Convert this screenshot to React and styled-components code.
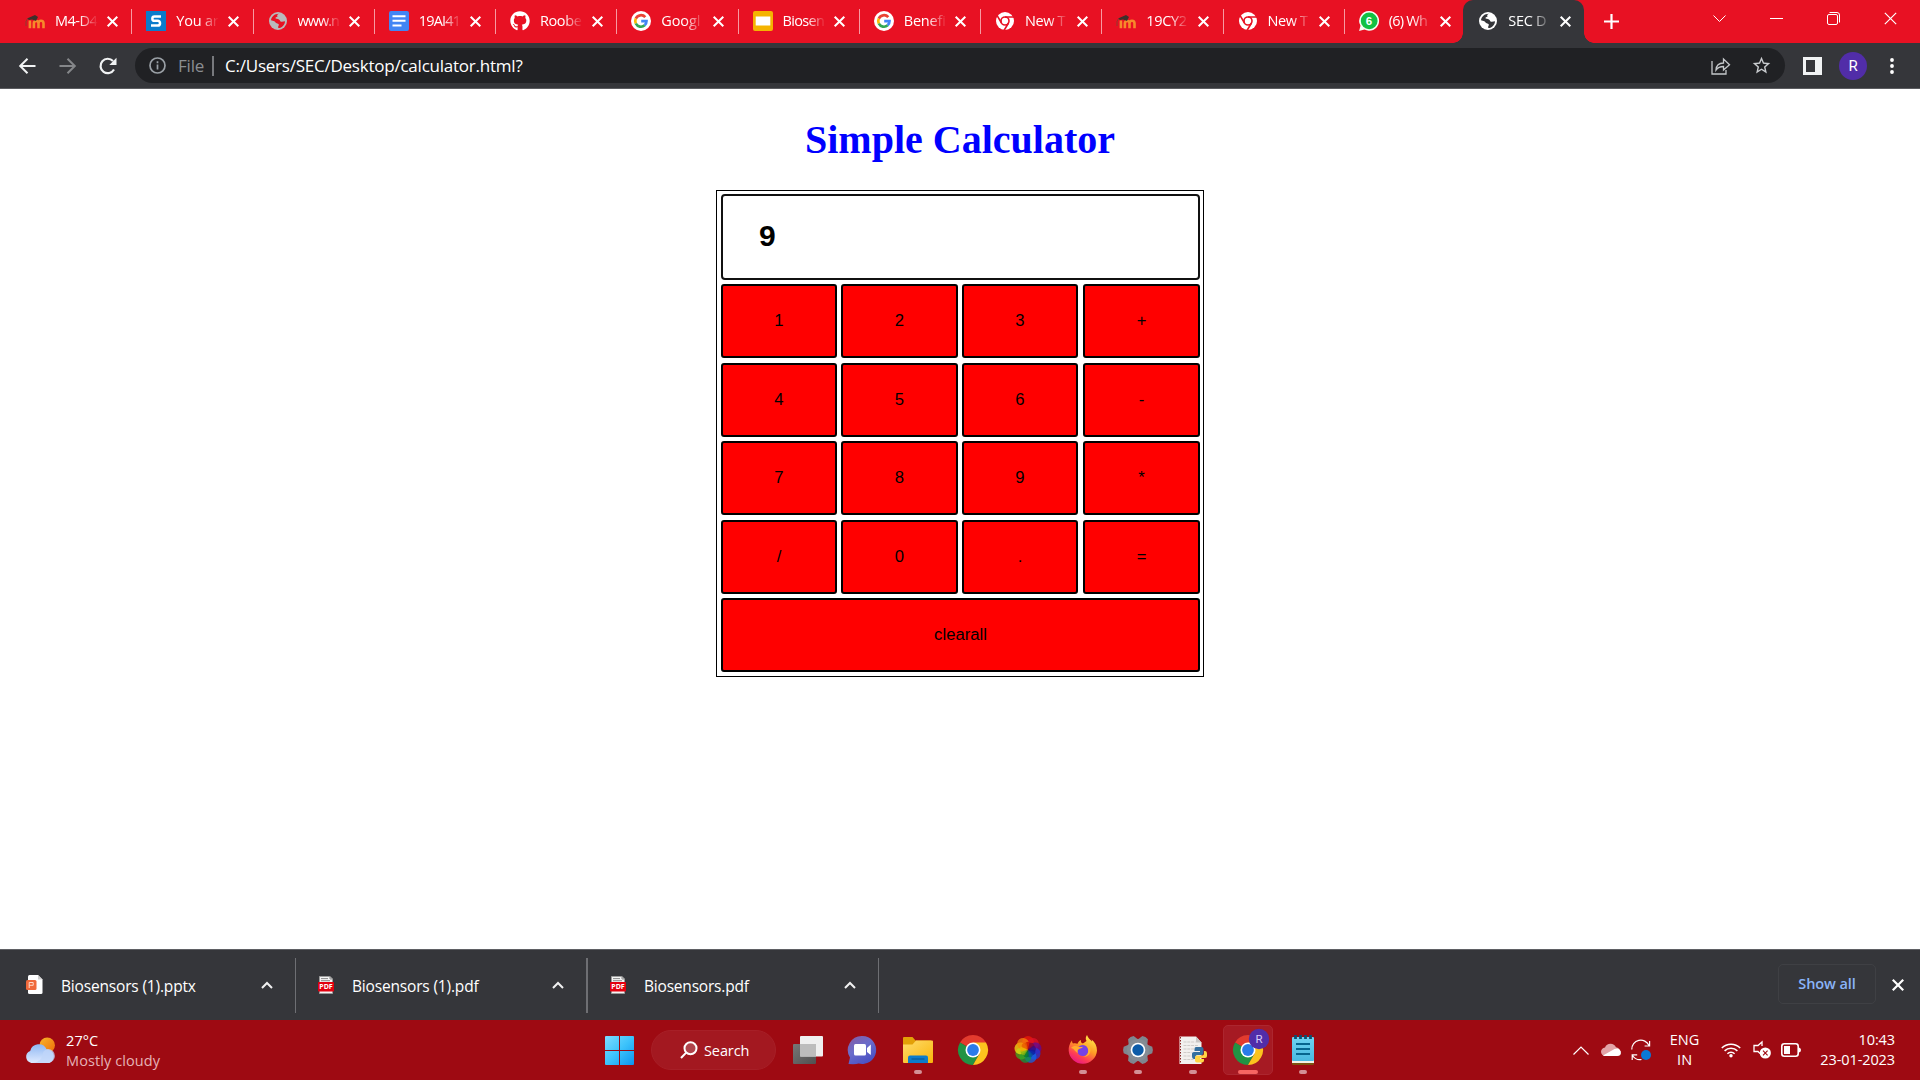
import React from "react";
import styled, { createGlobalStyle, css } from "styled-components";
import { FaGithub } from "react-icons/fa";

const ui = `"Open Sans", "Noto Sans", sans-serif`;

const GlobalStyle = createGlobalStyle`
  *, *::before, *::after { box-sizing: border-box; }
  html, body { margin: 0; padding: 0; background: #fff; }
  body { font-family: ${ui}; overflow: hidden; }
  svg { display: block; flex: none; overflow: visible; }
`;

const Screen = styled.div`
  width: 1920px;
  height: 1080px;
  display: flex;
  flex-direction: column;
  background: #fff;
`;

/* ---------- tab strip ---------- */

const TabStrip = styled.header`
  height: 43px;
  flex: none;
  display: flex;
  padding-left: 10px;
  background: #e81123;
  color: #fff;
`;

const TabBox = styled.div`
  width: ${(p) => (p.$last ? 119.5 : p.$active ? 121 : 121.25)}px;
  flex: none;
  height: 43px;
  display: flex;
  align-items: center;
  padding: 0 0 1px 15px;
  position: relative;
  ${(p) =>
    p.$divider &&
    css`
      &::after {
        content: "";
        position: absolute;
        right: -1px;
        top: 9px;
        width: 1px;
        height: 25px;
        background: #f79aa2;
      }
    `}
  ${(p) =>
    p.$active &&
    css`
      background: #35363a;
      border-radius: 10px 10px 0 0;
      &::before,
      &::after {
        content: "";
        position: absolute;
        bottom: 0;
        width: 10px;
        height: 10px;
      }
      &::before {
        left: -10px;
        background: radial-gradient(circle at 0 0, transparent 9.5px, #35363a 10px);
      }
      &::after {
        right: -10px;
        background: radial-gradient(circle at 100% 0, transparent 9.5px, #35363a 10px);
      }
    `}
`;

const TabTitle = styled.span`
  width: 43px;
  margin-left: 10px;
  margin-right: 8.5px;
  overflow: hidden;
  white-space: nowrap;
  font-size: 14.5px;
  line-height: 20px;
  letter-spacing: ${(p) => p.$track}px;
  -webkit-mask-image: linear-gradient(90deg, #000 24px, transparent 43px);
  mask-image: linear-gradient(90deg, #000 24px, transparent 43px);
`;

const NewTab = styled.div`
  width: 54px;
  display: flex;
  align-items: center;
  justify-content: center;
`;

const WindowControls = styled.div`
  margin-left: auto;
  padding-right: 1px;
  display: flex;
`;

const WindowButton = styled.div`
  width: 57px;
  height: 37px;
  display: flex;
  align-items: center;
  justify-content: center;
`;

/* ---------- toolbar ---------- */

const Toolbar = styled.nav`
  height: 46px;
  flex: none;
  display: flex;
  align-items: center;
  padding-left: 17px;
  background: #35363a;
  border-bottom: 1px solid #5b5c60;
`;

const NavIcon = styled.span`
  width: 40px;
  display: flex;
`;

const Omnibox = styled.div`
  width: 1650px;
  height: 35px;
  margin-left: -2px;
  padding: 0 13px 0 14px;
  border-radius: 18px;
  background: #202124;
  display: flex;
  align-items: center;
`;

const Scheme = styled.span`
  margin-left: 12px;
  width: 26px;
  font-size: 17px;
  letter-spacing: -0.2px;
  line-height: 24px;
  color: #8b8e92;
`;

const SchemeRule = styled.i`
  width: 2px;
  height: 20px;
  margin: 0 11px 0 8px;
  background: #77797d;
`;

const Url = styled.span`
  flex: 1;
  font-size: 17px;
  line-height: 24px;
  letter-spacing: -0.23px;
  color: #fff;
`;

const OmniActions = styled.span`
  display: flex;
  align-items: center;
  gap: 20px;
`;

const ToolbarEnd = styled.div`
  flex: 1;
  display: flex;
  align-items: center;
  padding-left: 18px;
`;

const Avatar = styled.span`
  width: 28px;
  height: 28px;
  margin: 0 23px 0 17px;
  border-radius: 50%;
  background: #512da8;
  color: #fff;
  font: 15px/28px Roboto, sans-serif;
  text-align: center;
`;

/* ---------- page ---------- */

const Page = styled.main`
  flex: 1;
  display: flex;
  flex-direction: column;
  align-items: center;
`;

const Heading = styled.h1`
  margin: 28px 0 27px;
  font: bold 40px/46px "Liberation Serif", serif;
  color: #00f;
`;

const Calculator = styled.form`
  width: 488px;
  height: 487px;
  margin: 0;
  padding: 3px 3px 4px 4px;
  border: 1px solid #000;
  display: grid;
  grid-template-columns: 116px 117px 117px 117px;
  grid-template-rows: 86px 75px 74px 75px 74px 74px;
  gap: 4px;
`;

const Display = styled.output`
  grid-column: 1 / -1;
  padding-left: 36px;
  border: 2px solid #111;
  border-radius: 4px;
  font: bold 30px/79px "Liberation Sans", sans-serif;
  color: #000;
`;

const Key = styled.button`
  grid-column: ${(p) => (p.$wide ? "1 / -1" : "auto")};
  height: 74px;
  margin: 0;
  padding: 0;
  border: 2px solid #000;
  border-radius: 3px;
  background: #f00;
  color: #000;
  font: 16.67px "Liberation Sans", sans-serif;
  &:nth-of-type(4n + 3) {
    margin-right: 1px;
  }
`;

/* ---------- downloads shelf ---------- */

const Shelf = styled.section`
  height: 71px;
  flex: none;
  display: flex;
  align-items: center;
  border-top: 1px solid #5f6064;
  background: #35363a;
  color: #fff;
`;

const Download = styled.div`
  width: ${(p) => p.$width}px;
  height: 55px;
  display: flex;
  align-items: center;
  padding: 0 22px 0 ${(p) => p.$inset}px;
  border-right: ${(p) => p.$rule || 1}px solid #6e6f73;
`;

const FileName = styled.span`
  flex: 1;
  margin-left: 18px;
  padding-top: 1px;
  font-size: 15.5px;
  line-height: 22px;
  letter-spacing: ${(p) => p.$track}px;
  white-space: nowrap;
`;

const ShowAll = styled.button`
  width: 98px;
  height: 40px;
  margin: 0 16px 2px auto;
  padding: 0;
  border: 1px solid #3f4044;
  border-radius: 5px;
  background: transparent;
  color: #8ab4f8;
  font: 600 14.5px/38px ${ui};
  letter-spacing: -0.1px;
`;

const ShelfClose = styled.span`
  width: 28px;
  padding-bottom: 1px;
`;

/* ---------- taskbar ---------- */

const Taskbar = styled.footer`
  height: 60px;
  flex: none;
  display: flex;
  align-items: center;
  background: #9e0a12;
  color: #fff;
`;

const Weather = styled.div`
  width: 592px;
  padding: 1px 0 0 25px;
  display: flex;
  align-items: center;
  gap: 10px;
`;

const Lines = styled.div`
  display: flex;
  flex-direction: column;
  text-align: ${(p) => p.$align || "left"};
  font-size: 14.5px;
  line-height: 20px;
  letter-spacing: ${(p) => p.$track || 0}px;
  white-space: nowrap;
`;

const Muted = styled.span`
  color: #e5b3b6;
`;

const Slot = styled.div`
  width: 55px;
  height: 60px;
  display: flex;
  align-items: center;
  justify-content: center;
  position: relative;
  &::after {
    content: "";
    display: ${(p) => (p.$running ? "block" : "none")};
    position: absolute;
    bottom: 6px;
    left: ${(p) => (p.$active ? 17.5 : 23.5)}px;
    width: ${(p) => (p.$active ? 20 : 8)}px;
    height: 4px;
    border-radius: 2px;
    background: ${(p) => (p.$active ? "#f76562" : "#d48f95")};
  }
`;

const ActiveTile = styled.div`
  width: 50px;
  height: 50px;
  border-radius: 5px;
  border: 1px solid #ac262f;
  background: #a61a23;
  display: flex;
  align-items: center;
  justify-content: center;
`;

const Search = styled.div`
  width: 125px;
  height: 40px;
  margin: 0 4px;
  padding-left: 28px;
  border-radius: 20px;
  border: 1px solid #a71f27;
  background: #a31820;
  display: flex;
  align-items: center;
  gap: 6px;
  font-size: 14.5px;
  letter-spacing: -0.1px;
`;

const Tray = styled.div`
  margin-left: auto;
  padding-right: 25px;
  display: flex;
  align-items: center;
`;

const TrayIcon = styled.span`
  margin-right: ${(p) => p.$after}px;
`;

/* ---------- drawings ---------- */

const Cross = ({ size = 11, weight = 2, color = "#fff" }) => (
  <svg width={size} height={size} viewBox="0 0 11 11">
    <path d="M.7.7l9.6 9.6M10.3.7L.7 10.3" stroke={color} strokeWidth={weight} />
  </svg>
);

const Moodle = () => (
  <svg width="20" height="20" viewBox="0 0 20 20">
    <path
      d="M4 17.300V9.500M8 17.300v-5a2.200 2.200 0 0 1 4.600 0v5M12.600 12.300a2.500 2.500 0 0 1 5 0v5"
      fill="none"
      stroke="#f7892b"
      strokeWidth="2.600"
      transform="translate(.9 0)"
    />
    <path d="M2 7.500L10 4l3 2-2 4-4-1.500-3 .5z" fill="#3e302b" />
    <path d="M2.500 7.500L1 10.500v4.500" fill="none" stroke="#8e3a30" strokeWidth="1" />
  </svg>
);

const Swayam = () => (
  <svg width="20" height="20" viewBox="0 0 20 20">
    <rect width="20" height="20" fill="#0b7bcb" />
    <path
      d="M15 5.500H8.500a2 2 0 0 0 0 4.300h3.200a2.300 2.300 0 0 1 0 4.700H5"
      fill="none"
      stroke="#fff"
      strokeWidth="2.500"
    />
  </svg>
);

const Globe = ({ land = "#e81123", sea = "#fff" }) => (
  <svg width="20" height="20" viewBox="0 0 20 20">
    <circle cx="10" cy="10" r="9" fill={sea} />
    <path
      d="M11 2.800C9.200 3.500 8.800 4.600 9.600 5.500 8.300 6 7.200 6.500 7.600 7.500 9 7.900 11 8 11.800 9.200 12.300 10.500 13 11 14 10.800l3-.6c0 3.300-2.800 6.600-6.600 6.900-.6-.9-.1-1.800.3-2.500.6-1.300-.3-2-1.500-2.200C7.600 12.200 7.400 11 6.300 10.300L3 9.300C3.300 5.700 6.600 2.700 11 2.800z"
      fill={land}
    />
    <path d="M3 10.200c1.800-.3 3.300.4 4 1.600.8 1.200-.2 2.600.5 4.500C4.800 15.300 3 13 3 10.200z" fill={sea} />
  </svg>
);

const Docs = () => (
  <svg width="20" height="20" viewBox="0 0 20 20">
    <rect width="20" height="20" rx="2" fill="#4285f4" />
    <path d="M3.500 5.300h13M3.500 9.700h13M3.500 14.500h9" stroke="#fff" strokeWidth="2" />
  </svg>
);

const Google = () => (
  <svg width="20" height="20" viewBox="0 0 20 20">
    <circle cx="10" cy="10" r="10" fill="#fff" />
    <g fill="none" strokeWidth="2.700">
      <path d="M14.300 6.200A5.700 5.700 0 0 0 4.800 7.600" stroke="#ea4335" />
      <path d="M4.800 7.600a5.700 5.700 0 0 0 0 4.900" stroke="#fbbc05" />
      <path d="M4.800 12.500a5.700 5.700 0 0 0 8.900 1.800" stroke="#34a853" />
      <path d="M13.700 14.300c1.200-1.100 1.800-2.500 1.800-4.200H10.200" stroke="#4285f4" />
    </g>
  </svg>
);

const Slides = () => (
  <svg width="20" height="20" viewBox="0 0 20 20">
    <rect width="20" height="20" rx="2" fill="#f5b400" />
    <rect x="2.700" y="5.500" width="14.600" height="9" fill="#fff" />
  </svg>
);

const ChromeMono = () => (
  <svg width="20" height="20" viewBox="0 0 20 20">
    <circle cx="10" cy="10" r="9" fill="#fff" />
    <circle cx="10" cy="10" r="4" fill="none" stroke="#e81123" strokeWidth="1.600" />
    <path d="M10 6h9M6.500 12L2 4.300M13.500 12L9 19.500" stroke="#e81123" strokeWidth="1.600" />
  </svg>
);

const WhatsApp = () => (
  <svg width="20" height="20" viewBox="0 0 20 20">
    <path d="M10.200 0a9.900 9.900 0 1 1-4.700 18.600L.1 20l1.400-5.200A9.900 9.900 0 0 1 10.200 0z" fill="#f4fff6" />
    <circle cx="10.200" cy="9.900" r="8.400" fill="#12c143" />
    <text x="10" y="14" fontFamily="Liberation Sans" fontWeight="bold" fontSize="11.500" fill="#fff" textAnchor="middle">
      6
    </text>
  </svg>
);

const Chrome = ({ badge }) => (
  <svg width="30" height="30" viewBox="0 0 30 30">
    <path d="M15 15L2 7.500A15 15 0 0 1 28 7.500z" fill="#e33b2e" />
    <path d="M15 15L2 7.500A15 15 0 0 0 15 30l6.500-11.200z" fill="#219344" />
    <path d="M15 7.500h13A15 15 0 0 1 15 30l6.500-11.200z" fill="#fcc31e" />
    <circle cx="15" cy="15" r="7.500" fill="#fff" />
    <circle cx="15" cy="15" r="5.900" fill="#2a7bea" />
    {badge && (
      <g>
        <circle cx="26" cy="4" r="10.200" fill="#512da8" />
        <text x="26" y="8" fontFamily="Roboto" fontSize="11.500" fill="#d7c9f7" textAnchor="middle">
          {badge}
        </text>
      </g>
    )}
  </svg>
);

const PowerPointFile = () => (
  <svg width="17" height="20" viewBox="0 0 17 20">
    <path d="M2 1.500Q2 0 3.500 0H12l4.500 4.500V17.500q0 1.500-1.500 1.500H3.500Q2 19 2 17.500z" fill="#fff" />
    <path d="M12 0l4.500 4.500H12z" fill="#d0d0d0" />
    <rect y="5" width="10.500" height="10" rx="1.500" fill="#f0693b" />
    <path d="M3.200 13V7.500h4v2.800h-4" fill="none" stroke="#ffd9c8" strokeWidth="1" />
  </svg>
);

const PdfFile = () => (
  <svg width="16" height="18" viewBox="0 0 16 18">
    <path d="M1.500.5h10.500l2.500 2.500v14.500h-13z" fill="#f4f4f4" stroke="#9c9c9c" />
    <path d="M3 2.600h7M3 4.700h9M12 .5V3h2.500" stroke="#8b8b8b" fill="none" />
    <rect y="6" width="16" height="9.500" rx=".7" fill="#e3000f" />
    <text x="8" y="13.200" fontFamily="Open Sans" fontWeight="bold" fontSize="7" fill="#fff" textAnchor="middle">
      PDF
    </text>
  </svg>
);

const Chevron = () => (
  <svg width="12" height="8" viewBox="0 0 12 8">
    <path d="M1 7l5-5 5 5" fill="none" stroke="#f1f1f1" strokeWidth="2" />
  </svg>
);

const WeatherIcon = () => (
  <svg width="31" height="27" viewBox="0 0 30 26">
    <defs>
      <linearGradient id="sun" x1="0" y1="0" x2="1" y2="1">
        <stop offset="0" stopColor="#f8b62a" />
        <stop offset="1" stopColor="#ee6c09" />
      </linearGradient>
      <linearGradient id="cloud" x1="0" y1="0" x2="0" y2="1">
        <stop offset="0" stopColor="#8fb8f3" />
        <stop offset="1" stopColor="#dfeaff" />
      </linearGradient>
    </defs>
    <circle cx="21.500" cy="8" r="7.500" fill="url(#sun)" />
    <path d="M6 25a6 6 0 0 1-1-11.500 8.500 8.500 0 0 1 16-1.500A6.700 6.700 0 0 1 23.500 25z" fill="url(#cloud)" />
    <path d="M17 17c0-3 2.500-5.500 6-5.500a6.800 6.800 0 0 1 0 13.500H6c6 0 10-3 11-8z" fill="#c0d6fa" opacity=".75" />
  </svg>
);

const Windows = () => (
  <svg width="29" height="29" viewBox="0 0 29 29">
    <defs>
      <linearGradient id="win" x1="0" y1="0" x2="1" y2="1">
        <stop offset="0" stopColor="#7fdcff" />
        <stop offset=".5" stopColor="#3cc3fb" />
        <stop offset="1" stopColor="#0c93f0" />
      </linearGradient>
    </defs>
    <path d="M0 1Q0 0 1 0H14V14H0zM15 0H28Q29 0 29 1V14H15zM0 15H14V29H1Q0 29 0 28zM15 15H29V28Q29 29 28 29H15z" fill="url(#win)" />
  </svg>
);

const Magnifier = () => (
  <svg width="18" height="18" viewBox="0 0 18 18">
    <circle cx="10.500" cy="7.300" r="6" fill="#b0444c" stroke="#fff" strokeWidth="2" />
    <path d="M6.200 11.600L1 17" stroke="#fff" strokeWidth="2" />
  </svg>
);

const TaskView = () => (
  <svg width="30" height="28" viewBox="0 0 30 28">
    <defs>
      <linearGradient id="tvback" x1="0" y1="0" x2="1" y2="1">
        <stop offset="0" stopColor="#777" />
        <stop offset="1" stopColor="#505050" />
      </linearGradient>
    </defs>
    <rect y="8" width="23" height="20" rx="1" fill="url(#tvback)" />
    <rect x="7" width="23" height="20.500" rx="1" fill="#f0f0f0" />
    <path d="M7 8h16v12.500H7z" fill="#bdbdbd" />
  </svg>
);

const Chat = () => (
  <svg width="29" height="29" viewBox="0 0 29 29">
    <defs>
      <linearGradient id="chat" x1="0" y1="0" x2=".6" y2="1">
        <stop offset="0" stopColor="#8a5a9f" />
        <stop offset=".5" stopColor="#6a6ccb" />
        <stop offset="1" stopColor="#4a51c4" />
      </linearGradient>
    </defs>
    <path d="M14.500 0a14 14 0 1 1-4 27.500Q8 28.500.5 28l1.500-6.500A14 14 0 0 1 14.500 0z" fill="url(#chat)" />
    <rect x="6" y="8" width="12" height="11.500" rx="1.500" fill="#fff" />
    <path d="M19 12l3.800-3.500v10.500L19 16z" fill="#fff" />
  </svg>
);

const Folder = () => (
  <svg width="30" height="28" viewBox="0 0 30 28">
    <defs>
      <linearGradient id="fold" x1="0" y1="0" x2="1" y2="1">
        <stop offset="0" stopColor="#ffdc6b" />
        <stop offset="1" stopColor="#f9b50b" />
      </linearGradient>
    </defs>
    <path d="M0 2Q0 1 1 1h8.500l3 3.500H28v8H0z" fill="#e3a007" />
    <path d="M0 8.500h9.500L13 4.500h16q1 0 1 1V26q0 1-1 1H1q-1 0-1-1z" fill="url(#fold)" />
    <path d="M5 27v-5.500q0-2 2-2h16q2 0 2 2V27z" fill="#0c7ccb" />
    <path d="M8.500 23h13" stroke="#07508c" strokeWidth="1" />
  </svg>
);

const petals = ["#f01c08", "#e0102a", "#5c0a9c", "#1a3ae0", "#0a6af0", "#0aa040", "#3cb020", "#f4ea10", "#f88a0a"];
const cores = ["#d01400", "#8a0830", "#3a0a80", "#0c1c9c", "#08509c", "#067a30", "#8ab410", "#f0b400", "#e85a00"];

const Petals = () => (
  <svg width="30" height="30" viewBox="0 0 30 30">
    {petals.map((fill, i) => (
      <circle key={fill} cx="15" cy="7" r="5.900" fill={fill} opacity=".72" transform={`rotate(${i * 40} 15 14.700)`} />
    ))}
    {cores.map((fill, i) => (
      <path
        key={fill}
        d="M15 14.700L11.800 8.500Q15 4.800 18.200 8.500z"
        fill={fill}
        opacity=".8"
        transform={`rotate(${i * 40} 15 14.700)`}
      />
    ))}
  </svg>
);

const Firefox = () => (
  <svg width="30" height="30" viewBox="0 0 30 30">
    <defs>
      <linearGradient id="fox" x1=".8" y1="0" x2=".25" y2="1">
        <stop offset="0" stopColor="#fff14f" />
        <stop offset=".45" stopColor="#ff9a24" />
        <stop offset=".75" stopColor="#ff3d54" />
        <stop offset="1" stopColor="#e5138c" />
      </linearGradient>
    </defs>
    <path
      d="M4 5.500c0 1.500.5 2.500 1 3 1.500-.5 3-.4 4.500.2C10.500 6.500 11.500 5.500 13 5c-.6 1.500.3 3 2 3.500L18.500 6C17 3.500 18 1.500 19 0c1 3 3.200 4.500 5 6.500 0-.8-.1-1.200-.4-2C27 7 29 11 29 15.500A14.200 14.200 0 0 1 .7 16C.5 12 1.500 8.500 4 5.500z"
      fill="url(#fox)"
    />
    <circle cx="14.800" cy="15.500" r="5.500" fill="#7542e5" />
    <path d="M3 13c2-2 4-2.500 6.500-1.500 2 .8 4 .5 5.500.3-1 1.700-2.500 1.600-4 2.200-2 1-1.500 3-1 4-3-1-4-5-7-5z" fill="#ffab2e" />
    <path d="M15 8.500c4-.5 7 2 7.500 5.500.5 5-3 8-7.500 8 4-1 6-4 5-8-.5-2.500-2-4-5-5.500z" fill="#ffb52f" />
  </svg>
);

const Gear = () => (
  <svg width="30" height="30" viewBox="0 0 30 30">
    {[30, 90, 150, 210, 270, 330].map((a) => (
      <path key={a} d="M9.500 6L11.800.700Q15-.5 18.200.7L20.500 6z" fill="#7f868f" transform={`rotate(${a} 15 15)`} />
    ))}
    <circle cx="15" cy="15" r="11" fill="#858c94" />
    <circle cx="15" cy="15" r="7.300" fill="#fff" />
    <circle cx="15" cy="15" r="5.700" fill="#0c5ba8" />
  </svg>
);

const PythonFile = () => (
  <svg width="28" height="29" viewBox="0 0 28 29">
    <path d="M.5.500H17l5.500 6V28H.5z" fill="#f2f0ee" />
    <path d="M17 .5v6h5.500z" fill="#c9c7c5" />
    <path d="M1.500 1v27" stroke="#8a1f1f" strokeDasharray="1.500 1.500" />
    <path d="M4.500 6h12M4.500 9.500h15M4.500 13h11M4.500 16.500h8M4.500 20h8M4.500 23.500h10" stroke="#cfcbc8" strokeDasharray="3 .8" />
    <path d="M17 11h5.500q2 0 2 2v4q0 2-2 2h-4q-2 0-2 2v2H15q-2 0-2-3v-2.500q0-1.500 2-1.500h6v-1h-5.500V13q0-2 1.500-2z" fill="#34709f" />
    <path d="M25 15h1q2 0 2 3v2q0 2-2 2h-5v1h4v1.500q0 2-2 2h-5q-2 0-2-2V21.500q0-2 2-2h5q2 0 2-2z" fill="#ffd545" />
  </svg>
);

const Notepad = () => (
  <svg width="22" height="30" viewBox="0 0 22 30">
    <defs>
      <linearGradient id="note" x1="0" y1="0" x2="0" y2="1">
        <stop offset="0" stopColor="#6fd3f1" />
        <stop offset="1" stopColor="#49b9e0" />
      </linearGradient>
    </defs>
    <rect y="25" width="22" height="5" rx="1" fill="#7d5110" />
    <rect y="23" width="22" height="5" fill="#f5f0e6" />
    <rect y="2" width="22" height="24" rx="1" fill="url(#note)" />
    <path d="M4 9h14M4 14h14M4 19h14" stroke="#06658e" strokeWidth="2" />
    <path d="M3.500 0v4M8.500 0v4M13.500 0v4M18.500 0v4" stroke="#0a4f72" strokeWidth="2.800" />
  </svg>
);

const TrayUp = () => (
  <svg width="16" height="9" viewBox="0 0 16 9">
    <path d="M.5 8.500L8 1l7.500 7.500" fill="none" stroke="#fff" strokeWidth="1.200" />
  </svg>
);

const OneDrive = () => (
  <svg width="20" height="14" viewBox="0 0 20 14">
    <path d="M4.500 13A4.200 4.200 0 0 1 4 4.500 6 6 0 0 1 15 4.300 4.500 4.500 0 0 1 16 13z" fill="#e2a4a8" />
    <path d="M2 12.500L13.500 6q4.500-2 6.300 2.500.8 4.500-3.800 4.500H4.500Q3 13 2 12.500z" fill="#fff" />
  </svg>
);

const Sync = () => (
  <svg width="20" height="21" viewBox="0 0 20 21">
    <path d="M.8 9.500A9 9 0 0 1 18 5.500M18.600 1v5h-5M1.200 20v-5.200h5M1.500 15.500c2 3 5.500 4.700 9 4" fill="none" stroke="#fff" strokeWidth="1.200" />
    <circle cx="15" cy="15" r="5" fill="#0a78d7" />
  </svg>
);

const Wifi = () => (
  <svg width="20" height="16" viewBox="0 0 20 16">
    <path d="M.8 6a13 13 0 0 1 18.400 0M3.600 8.900a9 9 0 0 1 12.800 0M6.400 11.700a5 5 0 0 1 7.200 0" fill="none" stroke="#fff" strokeWidth="1.500" />
    <circle cx="10" cy="13.800" r="1.700" fill="#fff" />
  </svg>
);

const Muffled = () => (
  <svg width="18" height="18" viewBox="0 0 18 18">
    <path d="M9 5V1L5 4.500H1v6h4l2 2" fill="none" stroke="#fff" strokeWidth="1.300" />
    <circle cx="12.300" cy="12" r="5.600" fill="#fff" />
    <path d="M10 9.700l4.600 4.600M14.600 9.700L10 14.300" stroke="#9e0a12" strokeWidth="1.100" />
  </svg>
);

const Battery = () => (
  <svg width="20" height="14" viewBox="0 0 20 14">
    <rect x=".8" y=".8" width="16.400" height="12.400" rx="2.500" fill="none" stroke="#fff" strokeWidth="1.600" />
    <rect x="3" y="3" width="6" height="8" fill="#fff" />
    <path d="M18 4.500q2 .5 2 2.500t-2 2.500z" fill="#fff" />
  </svg>
);

/* ---------- content ---------- */

const tabs = [
  { icon: <Moodle />, title: "M4-D4", track: -0.5 },
  { icon: <Swayam />, title: "You ar", track: -0.2 },
  { icon: <Globe sea="#b9b9bb" />, title: "www.n", track: -1 },
  { icon: <Docs />, title: "19AI41", track: -0.8 },
  { icon: <FaGithub size={20} />, title: "Roobe", track: -0.4 },
  { icon: <Google />, title: "Googl", track: -0.1 },
  { icon: <Slides />, title: "Biosen", track: -0.65 },
  { icon: <Google />, title: "Benefi", track: -0.2 },
  { icon: <ChromeMono />, title: "New T", track: -0.4 },
  { icon: <Moodle />, title: "19CY2", track: -0.3 },
  { icon: <ChromeMono />, title: "New T", track: -0.4 },
  { icon: <WhatsApp />, title: "(6) Wh", track: -0.75 },
  { icon: <Globe land="#35363a" />, title: "SEC D", track: -0.3, active: true },
];

const keys = ["1", "2", "3", "+", "4", "5", "6", "-", "7", "8", "9", "*", "/", "0", ".", "="];

const Browser = () => (
  <>
    <TabStrip>
      {tabs.map((tab, i) => (
        <TabBox key={i} $active={tab.active} $last={i === tabs.length - 2} $divider={i < tabs.length - 2}>
          {tab.icon}
          <TabTitle $track={tab.track}>{tab.title}</TabTitle>
          <Cross />
        </TabBox>
      ))}
      <NewTab>
        <svg width="15" height="15" viewBox="0 0 15 15">
          <path d="M7.500 0v15M0 7.500h15" stroke="#fff" strokeWidth="2.200" />
        </svg>
      </NewTab>
      <WindowControls>
        <WindowButton>
          <svg width="13" height="8" viewBox="0 0 13 8">
            <path d="M.5.500l6 6 6-6" fill="none" stroke="#fff" strokeWidth="1" />
          </svg>
        </WindowButton>
        <WindowButton>
          <svg width="13" height="1" viewBox="0 0 13 1">
            <path d="M0 .5h13" stroke="#fff" />
          </svg>
        </WindowButton>
        <WindowButton>
          <svg width="13" height="13" viewBox="0 0 13 13">
            <rect x=".5" y="2.500" width="10" height="10" rx="1.500" fill="none" stroke="#fff" />
            <path d="M2.500.500H10Q12.500.5 12.500 3v7.500" fill="none" stroke="#fff" />
          </svg>
        </WindowButton>
        <WindowButton>
          <Cross size={13} weight={1} />
        </WindowButton>
      </WindowControls>
    </TabStrip>
    <Toolbar>
      <NavIcon>
        <svg width="20" height="20" viewBox="0 0 20 20">
          <path d="M18.500 10H3.500M10.500 2.700L3.200 10l7.300 7.300" fill="none" stroke="#f1f3f4" strokeWidth="2" />
        </svg>
      </NavIcon>
      <NavIcon>
        <svg width="20" height="20" viewBox="0 0 20 20">
          <path d="M2.500 10h15M10.500 2.700l7.300 7.300-7.300 7.300" fill="none" stroke="#85878a" strokeWidth="2" />
        </svg>
      </NavIcon>
      <NavIcon>
        <svg width="20" height="20" viewBox="0 0 20 20">
          <path d="M17 13.500A7.200 7.200 0 1 1 16 5" fill="none" stroke="#f1f3f4" strokeWidth="2.200" />
          <path d="M19.500 1.800V9h-7.200z" fill="#f1f3f4" />
        </svg>
      </NavIcon>
      <Omnibox>
        <svg width="17" height="17" viewBox="0 0 17 17">
          <circle cx="8.500" cy="8.500" r="7.500" fill="none" stroke="#9aa0a6" strokeWidth="1.700" />
          <path d="M8.500 7.500v5M8.500 4.300v1.900" stroke="#9aa0a6" strokeWidth="1.700" />
        </svg>
        <Scheme>File</Scheme>
        <SchemeRule />
        <Url>C:/Users/SEC/Desktop/calculator.html?</Url>
        <OmniActions>
          <svg width="20" height="18" viewBox="0 0 20 18">
            <path d="M1 4v13h14v-4" fill="none" stroke="#c4c7ca" strokeWidth="1.300" />
            <path d="M5 13c.3-4.500 3-7 7.500-7V2l6 5.700-6 5.300V9.500C9 9.500 6.800 10.500 5 13z" fill="none" stroke="#c4c7ca" strokeWidth="1.300" />
          </svg>
          <svg width="21" height="21" viewBox="0 0 24 24">
            <path
              d="M22 9.240l-7.190-.62L12 2 9.190 8.630 2 9.240l5.460 4.730L5.820 21 12 17.270 18.180 21l-1.630-7.030L22 9.240zM12 15.400l-3.760 2.270 1-4.280-3.320-2.880 4.380-.38L12 6.100l1.710 4.040 4.380.38-3.320 2.880 1 4.280L12 15.400z"
              fill="#c9cccf"
            />
          </svg>
        </OmniActions>
      </Omnibox>
      <ToolbarEnd>
        <svg width="19" height="18" viewBox="0 0 19 18">
          <path d="M0 0h19v18H0zM3 3v12h9V3z" fillRule="evenodd" fill="#f1f3f4" />
        </svg>
        <Avatar>R</Avatar>
        <svg width="4" height="16" viewBox="0 0 4 16">
          <path d="M2 2h0M2 8h0M2 14h0" stroke="#fff" strokeWidth="3.800" strokeLinecap="round" />
        </svg>
      </ToolbarEnd>
    </Toolbar>
  </>
);

const CalculatorPage = () => (
  <Page>
    <Heading>Simple Calculator</Heading>
    <Calculator>
      <Display>9</Display>
      {keys.map((k) => (
        <Key key={k} type="button">
          {k}
        </Key>
      ))}
      <Key type="button" $wide>
        clearall
      </Key>
    </Calculator>
  </Page>
);

const Downloads = () => (
  <Shelf>
    <Download $width={296} $inset={26}>
      <PowerPointFile />
      <FileName $track={-0.17}>Biosensors (1).pptx</FileName>
      <Chevron />
    </Download>
    <Download $width={292} $inset={22} $rule={2}>
      <PdfFile />
      <FileName $track={-0.17}>Biosensors (1).pdf</FileName>
      <Chevron />
    </Download>
    <Download $width={291} $inset={22}>
      <PdfFile />
      <FileName $track={-0.2}>Biosensors.pdf</FileName>
      <Chevron />
    </Download>
    <ShowAll>Show all</ShowAll>
    <ShelfClose>
      <Cross size={12} />
    </ShelfClose>
  </Shelf>
);

const SystemBar = () => (
  <Taskbar>
    <Weather>
      <WeatherIcon />
      <Lines $track={0.1}>
        <span>27°C</span>
        <Muted>Mostly cloudy</Muted>
      </Lines>
    </Weather>
    <Slot>
      <Windows />
    </Slot>
    <Search>
      <Magnifier />
      Search
    </Search>
    <Slot>
      <TaskView />
    </Slot>
    <Slot>
      <Chat />
    </Slot>
    <Slot $running>
      <Folder />
    </Slot>
    <Slot>
      <Chrome />
    </Slot>
    <Slot>
      <Petals />
    </Slot>
    <Slot $running>
      <Firefox />
    </Slot>
    <Slot $running>
      <Gear />
    </Slot>
    <Slot $running>
      <PythonFile />
    </Slot>
    <Slot $running $active>
      <ActiveTile>
        <Chrome badge="R" />
      </ActiveTile>
    </Slot>
    <Slot $running>
      <Notepad />
    </Slot>
    <Tray>
      <TrayIcon $after={12}>
        <TrayUp />
      </TrayIcon>
      <TrayIcon $after={10}>
        <OneDrive />
      </TrayIcon>
      <TrayIcon $after={19}>
        <Sync />
      </TrayIcon>
      <Lines $align="center">
        <span>ENG</span>
        <span>IN</span>
      </Lines>
      <TrayIcon $after={22} />
      <TrayIcon $after={12}>
        <Wifi />
      </TrayIcon>
      <TrayIcon $after={10}>
        <Muffled />
      </TrayIcon>
      <TrayIcon $after={19}>
        <Battery />
      </TrayIcon>
      <Lines $align="right" $track={-0.1}>
        <span>10:43</span>
        <span>23-01-2023</span>
      </Lines>
    </Tray>
  </Taskbar>
);

export default function App() {
  return (
    <Screen>
      <GlobalStyle />
      <Browser />
      <CalculatorPage />
      <Downloads />
      <SystemBar />
    </Screen>
  );
}
